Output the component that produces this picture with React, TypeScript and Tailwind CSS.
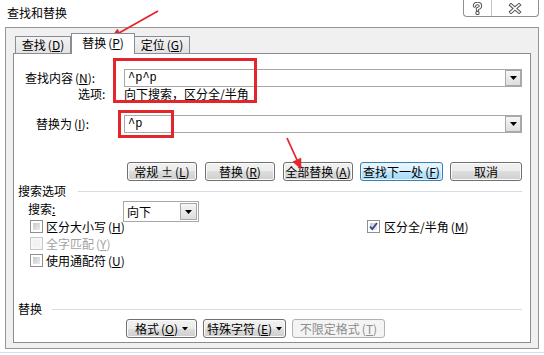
import React from "react";

function Mn({ c }: { c: string }) {
  return (
    <span className="ml-[2px]">
      (<span className="underline underline-offset-[1px]">{c}</span>)
    </span>
  );
}

function DropArrow() {
  return (
    <div className="w-[16px] h-[16px] border border-[#a9a9a9] bg-[linear-gradient(#f6f6f6,#dedede)] flex items-center justify-center shrink-0">
      <svg width="7" height="4" viewBox="0 0 7 4">
        <path d="M0 0h7L3.5 4z" fill="#000" />
      </svg>
    </div>
  );
}

function Cb({ checked = false, disabled = false }: { checked?: boolean; disabled?: boolean }) {
  return (
    <div
      className={
        disabled
          ? "w-[13px] h-[13px] border border-[#c8c8c8] bg-[#f7f7f7] p-[2px] shrink-0"
          : "w-[13px] h-[13px] border border-[#8e8f8f] bg-white p-[2px] shrink-0 relative"
      }
    >
      <div
        className={
          disabled
            ? "w-full h-full bg-[#f2f2f2]"
            : "w-full h-full bg-[linear-gradient(135deg,#c9c9c9,#ececec)]"
        }
      />
      {checked && (
        <svg width="13" height="13" viewBox="0 0 13 13" className="absolute left-[-1px] top-[-1px]">
          <path d="M3 6.5 L5.3 9 L10 3" stroke="#33448a" strokeWidth="1.8" fill="none" />
        </svg>
      )}
    </div>
  );
}

const btnNormal =
  "flex items-center justify-center h-[19px] rounded-[3px] border border-[#707070] bg-[linear-gradient(#f2f2f2,#ebebeb_50%,#dddddd_50%,#cfcfcf)] shadow-[inset_0_0_0_1px_#fbfbfb] text-[12px] leading-none text-black";
const btnDefault =
  "flex items-center justify-center h-[19px] rounded-[3px] border border-[#3c7fb1] bg-[linear-gradient(#eaf6fd,#d9f0fc_50%,#bee6fd_50%,#a7d9f5)] shadow-[inset_0_0_0_1px_#e4f4fc] text-[12px] leading-none text-black";
const btnDisabled =
  "flex items-center justify-center h-[19px] rounded-[3px] border border-[#adb2b5] bg-[#f4f4f4] text-[12px] leading-none text-[#8d8d8d]";

function SmallTri() {
  return (
    <svg width="6" height="4" viewBox="0 0 6 4" className="ml-[4px]">
      <path d="M0 0h6L3 3.5z" fill="#000" />
    </svg>
  );
}

export default function App() {
  return (
    <div className="w-[544px] h-[355px] bg-white relative overflow-hidden text-[12px] leading-[14px] text-black font-['Noto_Sans_CJK_SC','Noto_Sans',sans-serif]">
      {/* title bar */}
      <div className="h-[27px] flex items-start justify-between">
        <div className="pl-[7px] pt-[6px]">查找和替换</div>
        <div className="mr-[5px] flex h-[17px] border border-t-0 border-[#8e8f8f] rounded-b-[4px] bg-white overflow-hidden">
          <div className="w-[28px] flex items-center justify-center border-r border-[#c4c4c4]">
            <svg width="11" height="13" viewBox="0 0 11 13">
              <g fill="none" strokeLinecap="round" strokeLinejoin="round">
                <path d="M2.5 4 Q2.5 1.5 5.5 1.5 Q8.5 1.5 8.5 4 Q8.5 5.8 5.5 6.6 V8" stroke="#555" strokeWidth="3.4" />
                <circle cx="5.5" cy="11" r="0.6" stroke="#555" strokeWidth="3.2" />
                <path d="M2.5 4 Q2.5 1.5 5.5 1.5 Q8.5 1.5 8.5 4 Q8.5 5.8 5.5 6.6 V8" stroke="#fff" strokeWidth="1.4" />
                <circle cx="5.5" cy="11" r="0.4" stroke="#fff" strokeWidth="1.2" />
              </g>
            </svg>
          </div>
          <div className="w-[46px] flex items-center justify-center">
            <svg width="14" height="11" viewBox="0 0 14 11">
              <g strokeLinecap="square">
                <path d="M3 2 L11 9 M11 2 L3 9" stroke="#555" strokeWidth="3.6" />
                <path d="M3 2 L11 9 M11 2 L3 9" stroke="#fff" strokeWidth="1.6" />
              </g>
            </svg>
          </div>
        </div>
      </div>

      {/* frame */}
      <div className="ml-[5px] w-[534px] h-[322px] border border-[#969696] bg-[#f0f0f0] px-[7px] pt-[5px]">
        {/* tabs */}
        <div className="h-[20px] flex items-end pl-[2px] relative z-10">
          <div className="w-[56px] h-[17px] border border-b-0 border-[#898c95] bg-[linear-gradient(#f3f3f3,#e3e3e3)] flex items-center justify-center">
            查找<Mn c="D" />
          </div>
          <div className="w-[64px] h-[21px] -mb-px border border-b-0 border-[#898c95] bg-white flex items-center justify-center pb-[2px]">
            替换<Mn c="P" />
          </div>
          <div className="w-[55px] h-[17px] border border-b-0 border-l-0 border-[#898c95] bg-[linear-gradient(#f3f3f3,#e3e3e3)] flex items-center justify-center">
            定位<Mn c="G" />
          </div>
        </div>

        {/* page */}
        <div className="h-[290px] border border-[#898c95] bg-white flex flex-col">
          {/* find row */}
          <div className="mt-[15px] h-[18px] flex items-center">
            <div className="w-[110px] pl-[11px]">
              查找内容<Mn c="N" />:
            </div>
            <div className="w-[398px] h-[18px] border border-[#a8a8a8] bg-white flex items-center justify-between pl-[3px]">
              <span className="font-['Liberation_Mono',monospace] text-[12px]">^p^p</span>
              <DropArrow />
            </div>
          </div>
          {/* options row */}
          <div className="h-[14px] flex items-center">
            <div className="w-[110px] pl-[64px]">选项:</div>
            <div>向下搜索，区分全/半角</div>
          </div>
          {/* replace row */}
          <div className="mt-[14px] h-[18px] flex items-center">
            <div className="w-[110px] pl-[22px]">
              替换为<Mn c="I" />:
            </div>
            <div className="w-[398px] h-[18px] border border-[#a8a8a8] bg-white flex items-center justify-between pl-[3px]">
              <span className="font-['Liberation_Mono',monospace] text-[12px]">^p</span>
              <DropArrow />
            </div>
          </div>
          {/* buttons */}
          <div className="mt-[29px] flex">
            <div className={`${btnNormal} ml-[113px] w-[70px]`}>
              常规 ± <Mn c="L" />
            </div>
            <div className={`${btnNormal} ml-[8px] w-[70px]`}>
              替换<Mn c="R" />
            </div>
            <div className={`${btnNormal} ml-[8px] w-[70px]`}>
              全部替换<Mn c="A" />
            </div>
            <div className={`${btnDefault} ml-[7px] w-[83px]`}>
              查找下一处<Mn c="F" />
            </div>
            <div className={`${btnNormal} ml-[7px] w-[72px]`}>取消</div>
          </div>

          {/* search options header */}
          <div className="mt-[3px] h-[14px] flex items-center pl-[4px] pr-[8px]">
            <span>搜索选项</span>
            <div className="flex-1 h-px bg-[#d5dde2] ml-[12px] mt-[1px]" />
          </div>
          {/* search direction */}
          <div className="mt-[3px] h-[21px] flex items-start">
            <div className="w-[109px] pl-[14px] pt-[1px]">
              搜索<span className="underline underline-offset-[1px]">:</span>
            </div>
            <div className="w-[76px] h-[21px] border border-[#a8a8a8] bg-white flex items-center justify-between pl-[3px] pr-[1px]">
              <span>向下</span>
              <div className="w-[17px] h-[17px] border border-[#a9a9a9] bg-[linear-gradient(#f6f6f6,#dedede)] flex items-center justify-center">
                <svg width="7" height="4" viewBox="0 0 7 4">
                  <path d="M0 0h7L3.5 4z" fill="#000" />
                </svg>
              </div>
            </div>
          </div>
          {/* checkboxes */}
          <div className="-mt-[4px] h-[17px] flex items-center">
            <div className="w-[353px] pl-[16px] flex items-center">
              <Cb />
              <span className="ml-[3px]">
                区分大小写<Mn c="H" />
              </span>
            </div>
            <div className="flex items-center">
              <Cb checked />
              <span className="ml-[4px]">
                区分全/半角<Mn c="M" />
              </span>
            </div>
          </div>
          <div className="h-[17px] flex items-center pl-[16px] text-[#a3a3a3]">
            <Cb disabled />
            <span className="ml-[3px]">
              全字匹配<Mn c="Y" />
            </span>
          </div>
          <div className="h-[17px] flex items-center pl-[16px]">
            <Cb />
            <span className="ml-[3px]">
              使用通配符<Mn c="U" />
            </span>
          </div>

          {/* replace header */}
          <div className="mt-[33px] h-[14px] flex items-center pl-[4px] pr-[8px]">
            <span>替换</span>
            <div className="flex-1 h-px bg-[#d5dde2] ml-[10px] mt-[1px]" />
          </div>
          <div className="mt-[3px] flex">
            <div className={`${btnNormal} ml-[112px] w-[71px]`}>
              格式<Mn c="O" />
              <SmallTri />
            </div>
            <div className={`${btnNormal} ml-[6px] w-[83px]`}>
              特殊字符<Mn c="E" />
              <SmallTri />
            </div>
            <div className={`${btnDisabled} ml-[6px] w-[93px]`}>
              不限定格式<Mn c="T" />
            </div>
          </div>
        </div>
      </div>
      <div className="mt-[3px] h-[1px] bg-[#c6e6f3]" />

      {/* annotations */}
      <div className="absolute left-[113px] top-[58px] w-[144px] h-[45px] border-[3px] border-[#e3262b]" />
      <div className="absolute left-[118px] top-[110px] w-[56px] h-[28px] border-[3px] border-[#e3262b]" />
      <svg className="absolute left-0 top-0 pointer-events-none" width="544" height="355" viewBox="0 0 544 355">
        <g fill="#e3262b" stroke="#e3262b">
          <path d="M158 11 L119 33" strokeWidth="1.8" fill="none" />
          <path d="M111 38 L121.9 36.9 L117.4 29.1 Z" strokeWidth="0.5" />
          <path d="M287 138 L297 160" strokeWidth="1.8" fill="none" />
          <path d="M301 169 L301 158 L292.8 161.8 Z" strokeWidth="0.5" />
        </g>
      </svg>
    </div>
  );
}
